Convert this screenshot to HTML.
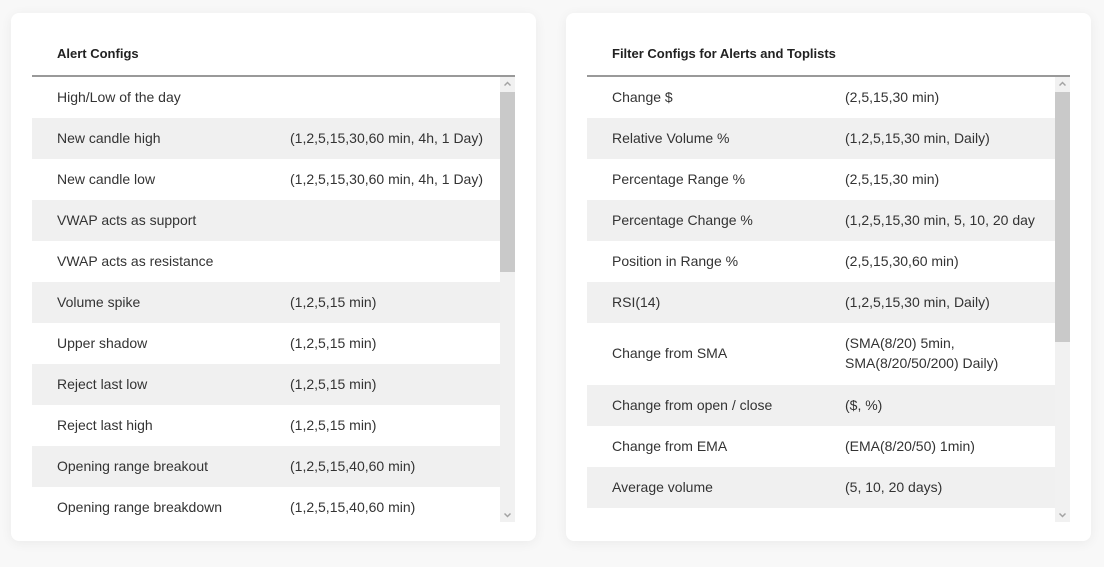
<!DOCTYPE html><html><head><style>
body{margin:0;width:1104px;height:567px;background:#f8f8f8;font-family:"Liberation Sans",sans-serif;position:relative;overflow:hidden}
.card{position:absolute;top:13px;width:525px;height:528px;background:#fff;border-radius:8px;box-shadow:0 2px 12px rgba(0,0,0,.06)}
.h{position:absolute;left:46px;top:33px;font-size:13px;font-weight:bold;color:#222}
.line{position:absolute;left:21px;width:483px;top:62px;height:2px;background:#999}
.sc{position:absolute;left:21px;top:64px;width:468px;height:445px;overflow:hidden}
.r{display:flex;align-items:center;height:41px;font-size:14px;color:#333}
.r>div{position:relative;top:-1px}
.r:nth-child(even){background:#f0f0f0}
.a{width:233px;padding-left:25px}
.b{flex:1;line-height:20px}
.tr{position:absolute;left:489px;top:64px;width:15px;height:445px;background:#f1f1f1}
.th{position:absolute;left:0;top:15px;width:15px;background:#c9c9c9}
.ar{position:absolute;left:4px}
</style></head><body>
<div class="card" style="left:11px">
<div class="h">Alert Configs</div><div class="line"></div>
<div class="sc">
<div class="r"><div class="a">High/Low of the day</div><div class="b"></div></div>
<div class="r"><div class="a">New candle high</div><div class="b">(1,2,5,15,30,60 min, 4h, 1 Day)</div></div>
<div class="r"><div class="a">New candle low</div><div class="b">(1,2,5,15,30,60 min, 4h, 1 Day)</div></div>
<div class="r"><div class="a">VWAP acts as support</div><div class="b"></div></div>
<div class="r"><div class="a">VWAP acts as resistance</div><div class="b"></div></div>
<div class="r"><div class="a">Volume spike</div><div class="b">(1,2,5,15 min)</div></div>
<div class="r"><div class="a">Upper shadow</div><div class="b">(1,2,5,15 min)</div></div>
<div class="r"><div class="a">Reject last low</div><div class="b">(1,2,5,15 min)</div></div>
<div class="r"><div class="a">Reject last high</div><div class="b">(1,2,5,15 min)</div></div>
<div class="r"><div class="a">Opening range breakout</div><div class="b">(1,2,5,15,40,60 min)</div></div>
<div class="r"><div class="a">Opening range breakdown</div><div class="b">(1,2,5,15,40,60 min)</div></div>
</div>
<div class="tr"><div class="th" style="height:180px"></div>
<svg class="ar" style="top:4px" width="7" height="6"><path d="M0.5 4.5L3.5 1.5L6.5 4.5" stroke="#a3a3a3" stroke-width="1.5" fill="none"/></svg>
<svg class="ar" style="bottom:4px" width="7" height="6"><path d="M0.5 1.5L3.5 4.5L6.5 1.5" stroke="#a3a3a3" stroke-width="1.5" fill="none"/></svg></div>
</div>
<div class="card" style="left:566px">
<div class="h">Filter Configs for Alerts and Toplists</div><div class="line"></div>
<div class="sc">
<div class="r"><div class="a">Change $</div><div class="b">(2,5,15,30 min)</div></div>
<div class="r"><div class="a">Relative Volume %</div><div class="b">(1,2,5,15,30 min, Daily)</div></div>
<div class="r"><div class="a">Percentage Range %</div><div class="b">(2,5,15,30 min)</div></div>
<div class="r"><div class="a">Percentage Change %</div><div class="b">(1,2,5,15,30 min, 5, 10, 20 day</div></div>
<div class="r"><div class="a">Position in Range %</div><div class="b">(2,5,15,30,60 min)</div></div>
<div class="r"><div class="a">RSI(14)</div><div class="b">(1,2,5,15,30 min, Daily)</div></div>
<div class="r" style="height:62px"><div class="a">Change from SMA</div><div class="b">(SMA(8/20) 5min,<br>SMA(8/20/50/200) Daily)</div></div>
<div class="r"><div class="a">Change from open / close</div><div class="b">($, %)</div></div>
<div class="r"><div class="a">Change from EMA</div><div class="b">(EMA(8/20/50) 1min)</div></div>
<div class="r"><div class="a">Average volume</div><div class="b">(5, 10, 20 days)</div></div>
</div>
<div class="tr"><div class="th" style="height:250px"></div>
<svg class="ar" style="top:4px" width="7" height="6"><path d="M0.5 4.5L3.5 1.5L6.5 4.5" stroke="#a3a3a3" stroke-width="1.5" fill="none"/></svg>
<svg class="ar" style="bottom:4px" width="7" height="6"><path d="M0.5 1.5L3.5 4.5L6.5 1.5" stroke="#a3a3a3" stroke-width="1.5" fill="none"/></svg></div>
</div>
</body></html>
